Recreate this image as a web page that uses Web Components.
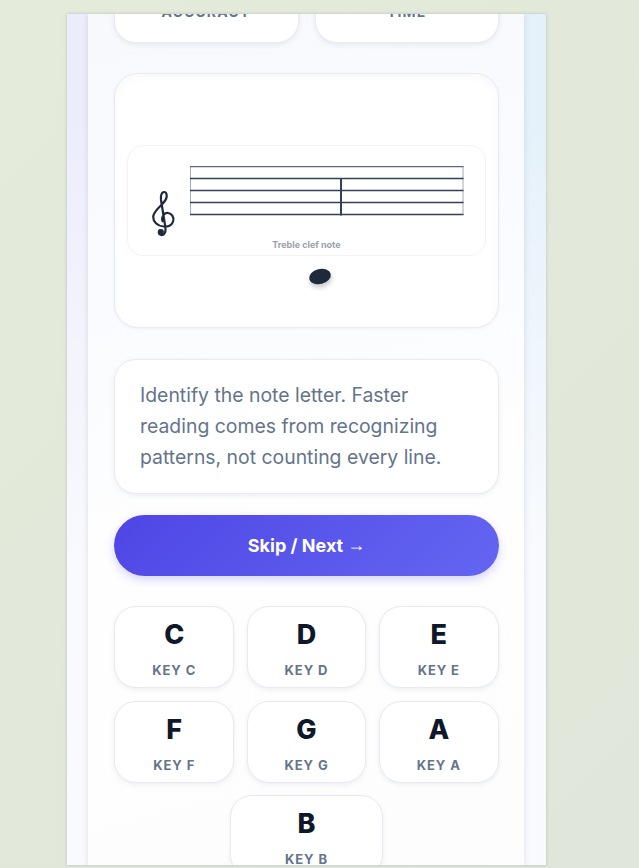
<!doctype html>
<html>
<head>
<meta charset="utf-8">
<style>
  html, body { margin: 0; height: 100%; }
  body {
    height: 868px;
    overflow: hidden;
    background: linear-gradient(135deg, #e4ebda, #e0e6d9);
    font-family: Inter, "Liberation Sans", sans-serif;
  }
</style>
</head>
<body>
<app-frame>
  <stat-row>
    <stat-card label="ACCURACY"></stat-card>
    <stat-card label="TIME"></stat-card>
  </stat-row>
  <note-stage label="Treble clef note"></note-stage>
  <hint-card>Identify the note letter. Faster reading comes from recognizing patterns, not counting every line.</hint-card>
  <next-button>Skip / Next <span>→</span></next-button>
  <key-pad>
    <key-button note="C"></key-button>
    <key-button note="D"></key-button>
    <key-button note="E"></key-button>
    <key-button note="F"></key-button>
    <key-button note="G"></key-button>
    <key-button note="A"></key-button>
    <key-button note="B" wide></key-button>
  </key-pad>
</app-frame>
<script>
/* outer window + inner scrolled panel */
class AppFrame extends HTMLElement {
  connectedCallback() {
    if (this.shadowRoot) return;
    this.attachShadow({ mode: "open" }).innerHTML = `
      <style>
        :host {
          display: block;
          box-sizing: border-box;
          width: 479px;
          height: 851px;
          margin: 14px 0 0 67px;
          padding: 0 22px 0 21px;
          overflow: hidden;
          background:
            linear-gradient(180deg, rgba(249, 250, 253, 0) 12%, #f9fafd 65%),
            linear-gradient(90deg, #ecedfb, #e4f1fa);
          box-shadow: 0 0 3px rgba(100, 116, 139, .35);
        }
        .panel {
          box-sizing: border-box;
          height: 100%;
          overflow: hidden;
          padding: 0 25px 0 26px;
          background: linear-gradient(165deg, #f8f9fd 0%, #f9fbfe 30%, #fefefe 58%, #fdfdfd 100%);
          box-shadow: 0 0 6px rgba(100, 116, 139, .2);
        }
        .scroll {
          display: flex;
          flex-direction: column;
          margin-top: -52px;
        }
      </style>
      <div class="panel"><div class="scroll"><slot></slot></div></div>
    `;
  }
}

class StatRow extends HTMLElement {
  connectedCallback() {
    if (this.shadowRoot) return;
    this.attachShadow({ mode: "open" }).innerHTML = `
      <style>
        :host {
          display: grid;
          grid-template-columns: 1fr 1fr;
          gap: 16px;
          margin-bottom: 30px;
        }
      </style>
      <slot></slot>
    `;
  }
}

class StatCard extends HTMLElement {
  connectedCallback() {
    if (this.shadowRoot) return;
    const root = this.attachShadow({ mode: "open" });
    root.innerHTML = `
      <style>
        :host {
          display: flex;
          align-items: flex-start;
          justify-content: center;
          box-sizing: border-box;
          height: 81px;
          padding-top: 40px;
          background: #fff;
          border: 1px solid #e8ebf3;
          border-radius: 22px;
          box-shadow: 0 2px 5px rgba(100, 116, 139, .12);
          color: #64748b;
          font-size: 14px;
          font-weight: 700;
          letter-spacing: .08em;
          line-height: 18px;
        }
      </style>
      <span></span>
    `;
    root.querySelector("span").textContent = this.getAttribute("label") ?? "";
  }
}

class NoteStage extends HTMLElement {
  connectedCallback() {
    if (this.shadowRoot) return;
    const root = this.attachShadow({ mode: "open" });
    root.innerHTML = `
      <style>
        :host {
          display: flex;
          position: relative;
          box-sizing: border-box;
          height: 255px;
          padding: 71px 12px 0;
          margin-bottom: 31px;
          background: #fff;
          border: 1px solid #e9ebf3;
          border-radius: 24px;
          box-shadow: inset 0 3px 8px rgba(100, 116, 139, .05), 0 1px 3px rgba(100, 116, 139, .08);
        }
        .sheet {
          flex: 1;
          height: 111px;
          box-sizing: border-box;
          position: relative;
          background: #fff;
          border: 1px solid #f1f3f6;
          border-radius: 16px;
        }
        .staff { position: absolute; left: 62px; top: 20px; }
        .clef { position: absolute; left: 22px; top: 44px; }
        .caption {
          position: absolute;
          left: 0;
          right: 0;
          top: 93px;
          text-align: center;
          font-size: 9px;
          font-weight: 700;
          line-height: 11px;
          color: #9a9fac;
        }
        .note {
          position: absolute;
          left: 194px;
          top: 195px;
          width: 22px;
          height: 15px;
          border-radius: 50%;
          background: #1e293b;
          transform: rotate(-14deg);
          box-shadow: 0 3px 5px rgba(15, 23, 42, .25);
        }
      </style>
      <div class="sheet">
        <svg class="clef" width="26" height="48" viewBox="0 0 26 48" fill="none" stroke="#1e293b" stroke-width="2.2">
          <path d="M13 32C10.5 28 14 22.5 18 23C22 23.5 24.2 27.5 23.2 31C22 35.5 18 37 13.5 36.5C7 36 3.2 31.5 3.2 27C3.2 20 13.5 15 16 9C17.5 5.5 16.5 2 14.2 2C11.5 2 10.5 6 11 10L15.5 38C16 43 13.5 45.5 11 45C8.5 44.5 8 41 10 40"/>
          <circle cx="11" cy="42" r="2.9" fill="#1e293b" stroke="none"/>
        </svg>
        <svg class="staff" width="275" height="52" viewBox="0 0 275 52" fill="none">
          <path d="M0 .5H273.5M.5 0V49M273 0V49" stroke="#a3adbb" stroke-width="1"/>
          <path d="M0 .5H273.5" stroke="#5c6779" stroke-width="1.3"/>
          <path d="M0 12.5H273.5M0 24.5H273.5M0 36.5H273.5M0 48.5H273.5" stroke="#334155" stroke-width="1.3"/>
          <path d="M151 12V49.5" stroke="#334155" stroke-width="2"/>
        </svg>
        <div class="caption"></div>
      </div>
      <div class="note"></div>
    `;
    root.querySelector(".caption").textContent = this.getAttribute("label") ?? "";
  }
}

class HintCard extends HTMLElement {
  connectedCallback() {
    if (this.shadowRoot) return;
    this.attachShadow({ mode: "open" }).innerHTML = `
      <style>
        :host {
          display: block;
          box-sizing: border-box;
          height: 135px;
          padding: 20px 25px 0;
          margin-bottom: 21px;
          background: #fff;
          border: 1px solid #e8ebf3;
          border-radius: 22px;
          box-shadow: 0 2px 5px rgba(100, 116, 139, .1);
          color: #64748b;
          font-size: 19.4px;
          line-height: 31px;
        }
      </style>
      <slot></slot>
    `;
  }
}

class NextButton extends HTMLElement {
  connectedCallback() {
    if (this.shadowRoot) return;
    this.attachShadow({ mode: "open" }).innerHTML = `
      <style>
        :host {
          display: flex;
          align-items: center;
          justify-content: center;
          gap: 4px;
          height: 61px;
          margin-bottom: 31px;
          border-radius: 31px;
          background: linear-gradient(135deg, #4f46e5, #6366f1);
          box-shadow: 0 4px 10px rgba(79, 70, 229, .22);
          color: #fff;
          font-size: 18px;
          font-weight: 700;
        }
        ::slotted(span) {
          font-family: "Liberation Sans", sans-serif;
          font-weight: 700;
        }
      </style>
      <slot></slot>
    `;
  }
}

class KeyPad extends HTMLElement {
  connectedCallback() {
    if (this.shadowRoot) return;
    this.attachShadow({ mode: "open" }).innerHTML = `
      <style>
        :host {
          display: flex;
          flex-wrap: wrap;
          justify-content: center;
          gap: 12.5px 12.5px;
          margin-top: -1px;
        }
      </style>
      <slot></slot>
    `;
  }
}

class KeyButton extends HTMLElement {
  connectedCallback() {
    if (this.shadowRoot) return;
    const note = this.getAttribute("note") ?? "";
    const root = this.attachShadow({ mode: "open" });
    root.innerHTML = `
      <style>
        :host {
          display: flex;
          flex-direction: column;
          align-items: center;
          box-sizing: border-box;
          width: 119.8px;
          height: 82px;
          padding-top: 11px;
          background: #fff;
          border: 1px solid #e6e9f2;
          border-radius: 22px;
          box-shadow: 0 2px 4px rgba(100, 116, 139, .1);
        }
        :host([wide]) { width: 153px; }
        .letter {
          font-size: 27px;
          font-weight: 800;
          line-height: 34px;
          color: #0f172a;
        }
        .name {
          margin-top: 10px;
          font-size: 13px;
          font-weight: 700;
          line-height: 16px;
          letter-spacing: .07em;
          color: #64748b;
        }
      </style>
      <span class="letter"></span>
      <span class="name"></span>
    `;
    root.querySelector(".letter").textContent = note;
    root.querySelector(".name").textContent = "KEY " + note;
  }
}

customElements.define("app-frame", AppFrame);
customElements.define("stat-row", StatRow);
customElements.define("stat-card", StatCard);
customElements.define("note-stage", NoteStage);
customElements.define("hint-card", HintCard);
customElements.define("next-button", NextButton);
customElements.define("key-pad", KeyPad);
customElements.define("key-button", KeyButton);
</script>
</body>
</html>
